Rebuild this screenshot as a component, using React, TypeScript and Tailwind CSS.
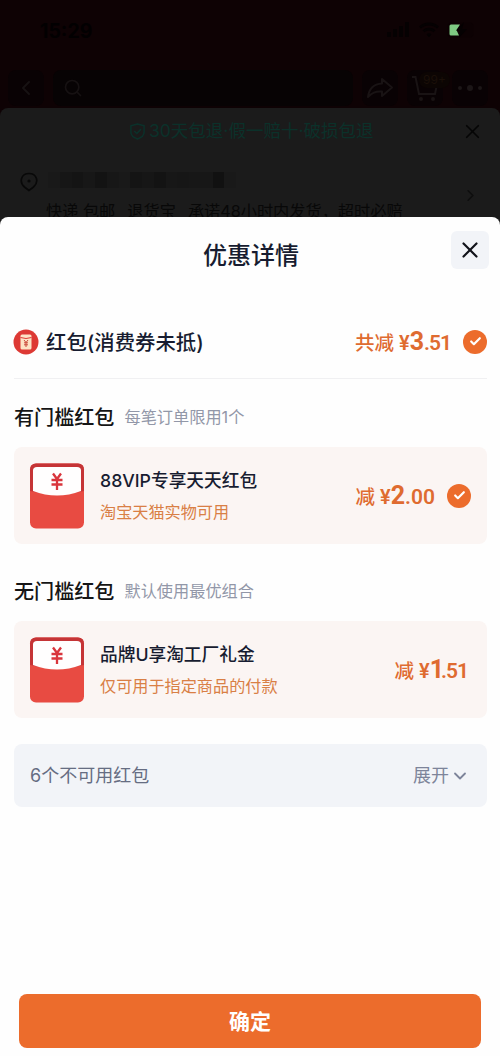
import React from "react";
import { Check, ChevronDown, ChevronLeft, ChevronRight, Search, X } from "lucide-react";

const StatusBar = () => {
    return (
        <div className="flex h-[67px] items-start justify-between pl-10 pr-[21px] pt-[20px]">
            <span className="text-[19.500px] font-bold leading-[23px] text-[#020001]">15:29</span>

            <div className="flex items-center gap-2 pt-[2px]">
                <svg className="h-[16px] w-[24px]" viewBox="0 0 24 16" fill="#050102">
                    <rect x="0" y="10" width="4" height="5" rx="1" />
                    <rect x="6" y="7" width="4" height="8" rx="1" />
                    <rect x="12" y="4" width="4" height="11" rx="1" />
                    <rect x="18" y="0" width="4" height="15" rx="1" />
                </svg>
                <svg className="h-[16px] w-[20px]" viewBox="0 0 20 16" fill="none" stroke="#050102" strokeWidth="2.8">
                    <path d="M1 5.5C6 0.8 14 0.8 19 5.5" />
                    <path d="M4.5 9.3C7.5 6.5 12.5 6.5 15.5 9.3" />
                    <path d="M8 12.5L10 15L12 12.5C11 11.5 9 11.5 8 12.5Z" fill="#050102" strokeWidth="1" />
                </svg>
                <svg className="h-[16px] w-[32px]" viewBox="0 0 32 16">
                    <rect x="0.5" y="0.5" width="26" height="15" rx="4" fill="#0c0103" />
                    <path d="M4 2.5H13L9.500 8L12 13.5H4Q2.5 13.500 2.500 12V4Q2.500 2.500 4 2.500Z" fill="#7fca83" />
                    <path d="M17 0L9 8.500H13L12 16L20 7H15Z" fill="#050102" />
                </svg>
            </div>
        </div>
    );
};

const NavBar = () => {
    return (
        <div className="flex h-[41px] items-start gap-[9px] px-2 pt-[3px]">
            <div className="flex h-9 w-9 items-center justify-center rounded-lg bg-[#090204]">
                <ChevronLeft className="size-6 text-[#171213]" />
            </div>
            <div className="flex h-9 w-[300px] items-center rounded-lg bg-[#070304] pl-2.5">
                <Search className="size-5 text-[#161112]" />
            </div>
            <div className="flex h-9 w-9 items-center justify-center rounded-lg bg-[#090204]">
                <svg className="size-7" viewBox="0 0 28 28" fill="none" stroke="#191314" strokeWidth="2" strokeLinejoin="round">
                    <path d="M16 5L26 13.500L16 22V17.500C9 17 6 19 2 23C3 15 8 10 16 9.500Z" />
                </svg>
            </div>
            <div className="relative flex h-9 w-9 items-center justify-center rounded-lg bg-[#090204]">
                <svg className="size-7" viewBox="0 0 28 28" fill="none" stroke="#191314" strokeWidth="2">
                    <path d="M1 3H4.500L8 20H24L26 10" />
                    <circle cx="10" cy="25" r="1" />
                    <circle cx="22" cy="25" r="1" />
                </svg>
                <span className="absolute left-3 top-0.5 rounded-full bg-[#0c0503] px-1 text-[12px] leading-[16px] text-[#1a0f08]">99+</span>
            </div>
            <div className="flex h-9 w-9 items-center justify-center gap-[5px] rounded-lg bg-[#090204]">
                <i className="size-1 rounded-full bg-[#1c1617]" />
                <i className="size-1.5 rounded-full bg-[#1c1617]" />
                <i className="size-1 rounded-full bg-[#1c1617]" />
            </div>
        </div>
    );
};

// blurred-out address blocks
const mosaic = [
    "bg-[#191919]", "bg-[#161616]", "bg-[#141414]", "bg-[#171717]", "bg-[#131313]", "bg-[#171717]", "bg-[#191919]",
    "bg-[#141414]", "bg-[#161616]", "bg-[#131313]", "bg-[#171717]", "bg-[#161616]", "bg-[#171717]", "bg-[#171717]", "bg-[#111111]", "bg-[#191919]",
];

const OrderPage = () => {
    return (
        <div className="h-[109px] overflow-hidden rounded-t-lg bg-[#1b1b1b]">
            <div className="flex h-[46px] items-center pl-[129px] pr-[16px]">
                <svg className="mr-[3px] size-[17px]" viewBox="0 0 18 18" fill="none" stroke="#0b312a" strokeWidth="1.6" strokeLinejoin="round">
                    <path d="M9 1L16 3V9.500C16 13 13 15.500 9 17C5 15.500 2 13 2 9.500V3Z" />
                    <path d="M5.500 8.500L8.300 11.200L12.700 6.500" />
                </svg>
                <span className="whitespace-nowrap pt-px text-[17.500px] text-[#0b312a]">30天包退·假一赔十·破损包退</span>
                <X className="ml-auto size-[23px] text-[#050505]" strokeWidth={1.8} />
            </div>

            <div className="flex items-start pl-5 pr-5 pt-[18px]">
                <svg className="mr-2.5 h-[20px] w-[18px] shrink-0" viewBox="0 0 18 20" fill="none" stroke="#080808" strokeWidth="1.7">
                    <path d="M9 18.500L4.500 15C-1.500 9.500 1.500 1.500 9 1.500S19.500 9.500 13.500 15Z" />
                    <circle cx="9" cy="9" r="1.600" fill="#080808" stroke="none" />
                </svg>
                <div className="flex h-[16px] w-[188px]">
                    {mosaic.map((color, i) => (
                        <div key={i} className={`h-full flex-1 ${color}`} />
                    ))}
                </div>
                <ChevronRight className="ml-auto mt-[14px] size-[19px] text-[#0e0e0e]" />
            </div>

            <div className="-mt-[6px] flex gap-3 whitespace-nowrap pl-[46px] text-[16.200px] leading-6 text-[#080808]">
                <span>快递 包邮</span>
                <span>退货宝</span>
                <span>承诺48小时内发货，超时必赔</span>
            </div>
        </div>
    );
};

const Packet = () => {
    return (
        <svg className="h-[66px] w-[56px] shrink-0" viewBox="0 0 56 66">
            <rect x="1" y="0.5" width="54" height="65" rx="6" fill="#e84b42" />
            <path d="M1 31V7Q1 0.500 7 0.500H49Q55 0.500 55 7V31Z" fill="#c53436" />
            <path d="M1 28L28 33L55 28V36H1Z" fill="#e84b42" />
            <path d="M4 7.500Q4 4 8 4H48Q52 4 52 7.500V28Q28 37 4 28Z" fill="#fffefe" />
            <path d="M24 10.500L28 16L32 10.500M22.500 17H33.500M22.500 21.500H33.500M28 16V27" fill="none" stroke="#d9353c" strokeWidth="2.3" />
        </svg>
    );
};

const CheckMark = () => {
    return (
        <span className="flex size-6 items-center justify-center rounded-full bg-[#ec6c2c]">
            <Check className="size-[13px] text-white" strokeWidth={4} />
        </span>
    );
};

type AmountProps = {
    label: string;
    whole: string;
    cents: string;
};

const Amount = ({ label, whole, cents }: AmountProps) => {
    return (
        <div className="flex items-baseline whitespace-nowrap pt-px leading-8 text-[#df6b30]">
            <span className="text-[19.500px] font-medium">{label}</span>
            <span className="ml-[5px] font-['Roboto','Noto_Sans_CJK_SC',sans-serif] text-[20px] font-semibold">¥</span>
            <span className={`font-['Roboto','Noto_Sans_CJK_SC',sans-serif] text-[25px] font-bold ${whole === "1" ? "-tracking-[3px]" : ""}`}>{whole}</span>
            <span className={`font-['Roboto','Noto_Sans_CJK_SC',sans-serif] text-[21px] font-semibold ${cents.endsWith("1") ? "-tracking-[1px]" : ""}`}>{cents}</span>
        </div>
    );
};

type CouponProps = AmountProps & {
    title: string;
    desc: string;
    checked?: boolean;
};

const Coupon = ({ title, desc, checked, ...amount }: CouponProps) => {
    return (
        <div className="flex h-[97px] items-center rounded-lg bg-[#fbf5f3] pl-[15px]">
            <Packet />
            <div className="ml-[15px] flex flex-col gap-[7px] whitespace-nowrap pt-[2px]">
                <h3 className="text-[17.700px] font-medium leading-6 text-[#171c30]">{title}</h3>
                <p className="text-[16.150px] leading-6 text-[#d97f45]">{desc}</p>
            </div>
            <div className={`ml-auto flex items-center gap-3 ${checked ? "pr-4" : "pr-[19px]"}`}>
                <Amount {...amount} />
                {checked && <CheckMark />}
            </div>
        </div>
    );
};

const SectionTitle = ({ title, note }: { title: string; note: string }) => {
    return (
        <div className="flex h-8 items-center gap-2.5 whitespace-nowrap">
            <h2 className="pt-[2px] text-[20.100px] font-medium text-[#151515]">{title}</h2>
            <span className="text-[16.200px] text-[#9297a8]">{note}</span>
        </div>
    );
};

const App = () => {
    return (
        <div className="flex h-[1056px] w-[500px] flex-col overflow-hidden bg-[#0e0204] font-['Inter','Noto_Sans_CJK_SC',sans-serif]">
            <StatusBar />
            <NavBar />
            <OrderPage />

            <div className="bg-[#1b1b1b]">
                <section className="flex h-[839px] flex-col rounded-t-lg bg-[#fefefe]">
                    <header className="grid h-[74px] grid-cols-[1fr_auto_1fr] items-center pl-[13px] pr-[11px]">
                        <h1 className="col-start-2 pt-1 text-[24px] font-medium text-[#171c30]">优惠详情</h1>
                        <button className="-mt-2 flex size-[38px] items-center justify-center justify-self-end rounded-md bg-[#f2f4f8]">
                            <X className="size-[26px] text-[#11131a]" strokeWidth={2} />
                        </button>
                    </header>

                    <div className="pl-[14px] pr-[13px]">
                        <div className="mt-[14px] flex h-[74px] items-center border-b border-[#f0f0f2]">
                            <svg className="-ml-px size-[26px]" viewBox="0 0 26 26">
                                <circle cx="13" cy="13" r="12.500" fill="#dd3934" />
                                <rect x="7.500" y="5.500" width="11" height="15" rx="1.500" fill="#fde3c5" />
                                <path d="M7.500 8.500Q13 10.500 18.500 8.500" fill="none" stroke="#dd3934" strokeWidth="1" />
                                <path d="M11 11L13 13.500L15 11M11 13.800H15M11 15.800H15M13 13.500V18" fill="none" stroke="#c9493a" strokeWidth="1" />
                            </svg>
                            <h2 className="ml-[7px] whitespace-nowrap pt-[3px] text-[20.400px] font-medium text-[#171c30]">红包(消费券未抵)</h2>
                            <div className="ml-auto flex items-center gap-3">
                                <Amount label="共减" whole="3" cents=".51" />
                                <CheckMark />
                            </div>
                        </div>

                        <div className="mt-[22px]">
                            <SectionTitle title="有门槛红包" note="每笔订单限用1个" />
                        </div>
                        <div className="mt-[14px]">
                            <Coupon title="88VIP专享天天红包" desc="淘宝天猫实物可用" label="减" whole="2" cents=".00" checked />
                        </div>

                        <div className="mt-[31px]">
                            <SectionTitle title="无门槛红包" note="默认使用最优组合" />
                        </div>
                        <div className="mt-[14px]">
                            <Coupon title="品牌U享淘工厂礼金" desc="仅可用于指定商品的付款" label="减" whole="1" cents=".51" />
                        </div>

                        <div className="mt-[26px] flex h-[63px] items-center justify-between rounded-lg bg-[#f2f4f8] pl-[16px] pr-[17px] text-[18px]">
                            <span className="text-[#666d82]">6个不可用红包</span>
                            <span className="flex items-center gap-[1px] text-[#7d849a]">
                                展开
                                <ChevronDown className="size-5" strokeWidth={2.2} />
                            </span>
                        </div>
                    </div>

                    <div className="mt-auto px-[19px] pb-2">
                        <button className="h-[54px] w-full rounded-lg bg-[#ec6c2c] pt-px text-[21px] font-bold text-white">确定</button>
                    </div>
                </section>
            </div>
        </div>
    );
};

export default App;
